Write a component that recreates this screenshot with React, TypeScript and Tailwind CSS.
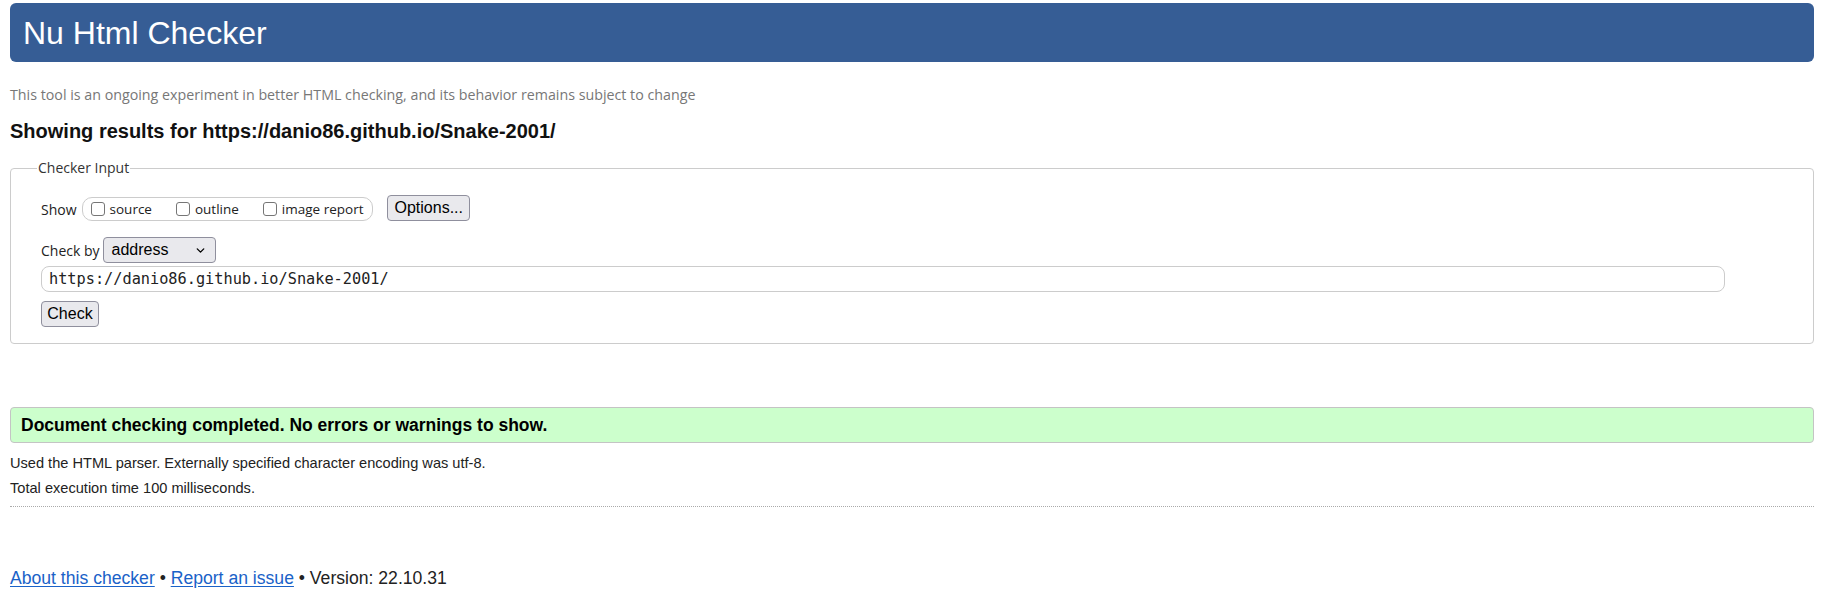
import { ChevronDown } from "lucide-react";

const segoe = "font-['Open_Sans',sans-serif]";
const arial = "font-['Liberation_Sans',Arial,sans-serif]";

function Box({ label }: { label: string }) {
  return (
    <span className="flex items-center gap-[5px]">
      <span className="w-[14px] h-[14px] rounded-[3px] border border-[#767676] bg-white" />
      <span>{label}</span>
    </span>
  );
}

export default function App() {
  return (
    <div className="min-h-screen bg-white pl-[10px] pr-[9px] pt-[3px] pb-4 text-[#222]">
      <header className="h-[59px] rounded-[6px] bg-[#365d95] flex items-center pl-[13px]">
        <h1 className={`${arial} text-[32px] leading-none text-white`}>Nu Html Checker</h1>
      </header>

      <p className={`${segoe} mt-[23px] text-[14.25px] leading-[20px] text-[#777]`}>
        This tool is an ongoing experiment in better HTML checking, and its behavior remains subject to change
      </p>

      <h2 className={`${arial} mt-[14px] text-[20px] leading-[24px] font-bold text-[#111]`}>
        Showing results for https://danio86.github.io/Snake-2001/
      </h2>

      <fieldset className="mt-[16px] border border-[#ccc] rounded-[4px] pl-[30px] pr-[30px] pb-[16px] pt-[20px]">
        <legend className={`${segoe} -ml-[4px] px-[1px] text-[14px] leading-[18px] text-[#333]`}>Checker Input</legend>

        <div className={`${segoe} flex items-center text-[13.5px] text-[#222]`}>
          <span className="mr-[5px] text-[14px]">Show</span>
          <div className="h-[24px] flex items-center gap-[24px] rounded-[10px] border border-[#ccc] pl-[8px] pr-[9px]">
            <Box label="source" />
            <Box label="outline" />
            <Box label="image report" />
          </div>
          <button className={`${arial} ml-[14px] h-[26px] px-[6px] rounded-[4px] border border-[#8f8f9d] bg-[#e9e9ed] text-[16px] text-black -mt-[3px]`}>
            Options...
          </button>
        </div>

        <div className={`${segoe} mt-[16px] flex items-center text-[14px]`}>
          <span className="mr-[3px]">Check by</span>
          <div className={`${arial} w-[113px] h-[26px] flex items-center justify-between pl-[8px] pr-[8px] rounded-[4px] border border-[#8f8f9d] bg-[#e9e9ed] text-[16px] text-black`}>
            <span>address</span>
            <ChevronDown size={13} strokeWidth={2.5} />
          </div>
        </div>

        <div className="mt-[3px] w-[1684px] h-[26px] flex items-center pl-[7px] rounded-[8px] border border-[#ccc] font-['DejaVu_Sans_Mono',monospace] text-[15.25px] text-[#222]">
          https://danio86.github.io/Snake-2001/
        </div>

        <button className={`${arial} mt-[9px] block h-[26px] w-[58px] rounded-[4px] border border-[#8f8f9d] bg-[#e9e9ed] text-[16px] text-black`}>
          Check
        </button>
      </fieldset>

      <div className={`${arial} mt-[63px] h-[36px] flex items-center pl-[10px] rounded-[4px] border border-[#c4c4c4] bg-[#ccffcc] text-[17.5px] font-bold text-black`}>
        Document checking completed. No errors or warnings to show.
      </div>

      <div className={`${arial} text-[14.6px] text-[#222] border-b border-dotted border-[#aaa] pb-[8px]`}>
        <p className="mt-[10px] leading-[20px]">Used the HTML parser. Externally specified character encoding was utf-8.</p>
        <p className="mt-[5px] leading-[20px]">Total execution time 100 milliseconds.</p>
      </div>

      <p className={`${arial} mt-[60px] text-[17.6px] leading-[22px] text-[#222]`}>
        <a href="#" className="text-[#1a62c8] underline underline-offset-2">About this checker</a>
        {" • "}
        <a href="#" className="text-[#1a62c8] underline underline-offset-2">Report an issue</a>
        {" • Version: 22.10.31"}
      </p>
    </div>
  );
}
